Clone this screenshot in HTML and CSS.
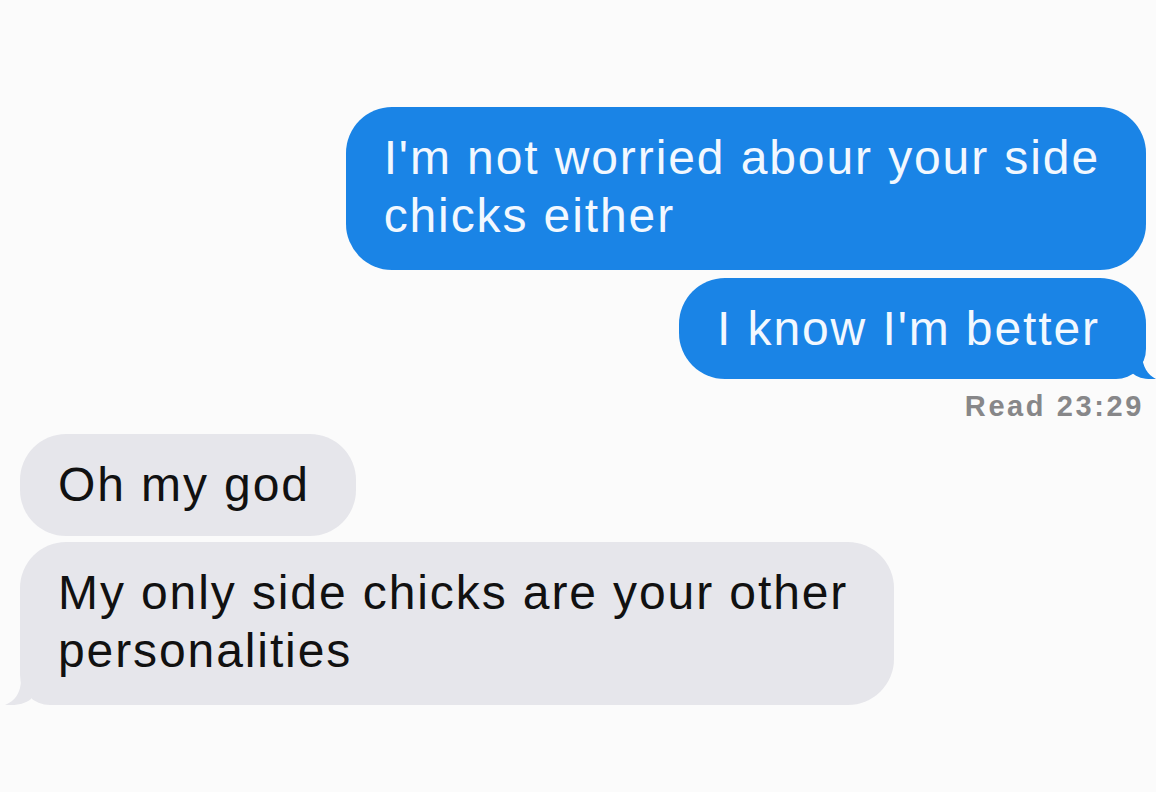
FILE: index.html
```html
<!DOCTYPE html>
<html lang="en">
<head>
  <meta charset="UTF-8">
  <title>Messages</title>
  <link rel="stylesheet" href="styles.css">
</head>
<body>
  <div class="thread">
    <div class="msg sent">I'm not worried abour your side<br>chicks either</div>
    <div class="msg sent last">I know I'm better</div>
    <div class="status">Read 23:29</div>
    <div class="msg recv">Oh my god</div>
    <div class="msg recv last">My only side chicks are your other<br>personalities</div>
  </div>
</body>
</html>
```

FILE: styles.css
```css
html, body { margin: 0; padding: 0; background: #fbfbfb; }
body { font-family: "Liberation Sans", Arial, sans-serif; width: 1156px; height: 792px; overflow: hidden; }
.thread { display: flex; flex-direction: column; padding: 107px 10px 0 20px; }
.msg { position: relative; font-size: 48px; letter-spacing: 1.9px; line-height: 58px; padding: 22px 46px 25px 38px; border-radius: 46px; margin-bottom: 8px; }
.sent { align-self: flex-end; background: #1a84e6; color: #f2f8ff; }
.recv { align-self: flex-start; background: #e6e6eb; color: #111; padding-bottom: 22px; }
.recv + .recv { margin-top: -2px; }
.sent.last { border-bottom-right-radius: 30px; margin-bottom: 0; padding-bottom: 21px; }
.recv.last { border-bottom-left-radius: 30px; padding-bottom: 25px; }
.sent.last::after { content: ""; position: absolute; right: -10px; bottom: 0; width: 24px; height: 26px; background: #1a84e6; clip-path: path("M0 0 L10 0 C10 14 16 22 24 26 C14 27 6 25 0 20 Z"); }
.recv.last::after { content: ""; position: absolute; left: -15px; bottom: 0; width: 26px; height: 26px; background: #e6e6eb; clip-path: path("M26 0 L16 0 C16 14 10 22 0 26 C10 27 20 25 26 20 Z"); }
.status { align-self: flex-end; margin: 11px 2px 11px 0; font-size: 29px; line-height: 33px; font-weight: bold; color: #878789; letter-spacing: 2.6px; }
```
